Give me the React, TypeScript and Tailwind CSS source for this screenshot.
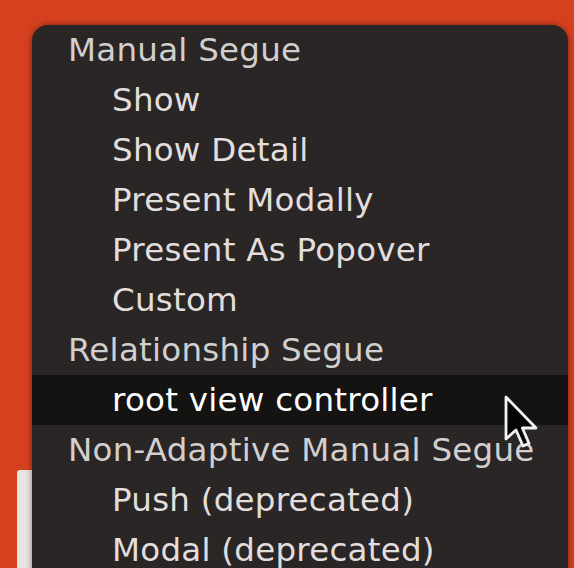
import React from 'react';

type Row = { label: string; indent?: boolean; active?: boolean };

const ROWS: Row[] = [
  { label: 'Manual Segue' },
  { label: 'Show', indent: true },
  { label: 'Show Detail', indent: true },
  { label: 'Present Modally', indent: true },
  { label: 'Present As Popover', indent: true },
  { label: 'Custom', indent: true },
  { label: 'Relationship Segue' },
  { label: 'root view controller', indent: true, active: true },
  { label: 'Non-Adaptive Manual Segue' },
  { label: 'Push (deprecated)', indent: true },
  { label: 'Modal (deprecated)', indent: true },
];

function Cursor() {
  return (
    <svg className="absolute left-[502px] top-[395px]" width="44" height="58" viewBox="0 0 22 29">
      <path
        d="M2 1 L2 22 L7 17.5 L10.5 25.5 L13.5 24.2 L10.2 16.5 L17 16.5 Z"
        fill="#050505"
        stroke="#f2f2f2"
        strokeWidth="1.4"
        strokeLinejoin="round"
      />
    </svg>
  );
}

export default function App() {
  return (
    <div className="relative h-[568px] w-[574px] overflow-hidden bg-[#d7401f]">
      <div className="absolute left-[17px] top-[470px] h-[110px] w-[20px] rounded-tl-[3px] bg-[#e9e5e2]" />
      <div className="relative ml-[32px] mt-[25px] w-[536px] rounded-t-[16px] bg-[#2a2626] pb-[20px] shadow-[0_0_6px_rgba(0,0,0,0.45)] font-['DejaVu_Sans',sans-serif]">
        {ROWS.map((row) => (
          <div
            key={row.label}
            className={
              'flex h-[50px] items-center whitespace-nowrap text-[32.5px] tracking-[0.25px] ' +
              (row.indent ? 'pl-[80px] ' : 'pl-[36px] ') +
              (row.active ? 'bg-[#151212] text-white' : row.indent ? 'text-[#e2dede]' : 'text-[#d2cfcf]')
            }
          >
            {row.label}
          </div>
        ))}
      </div>
      <Cursor />
    </div>
  );
}
